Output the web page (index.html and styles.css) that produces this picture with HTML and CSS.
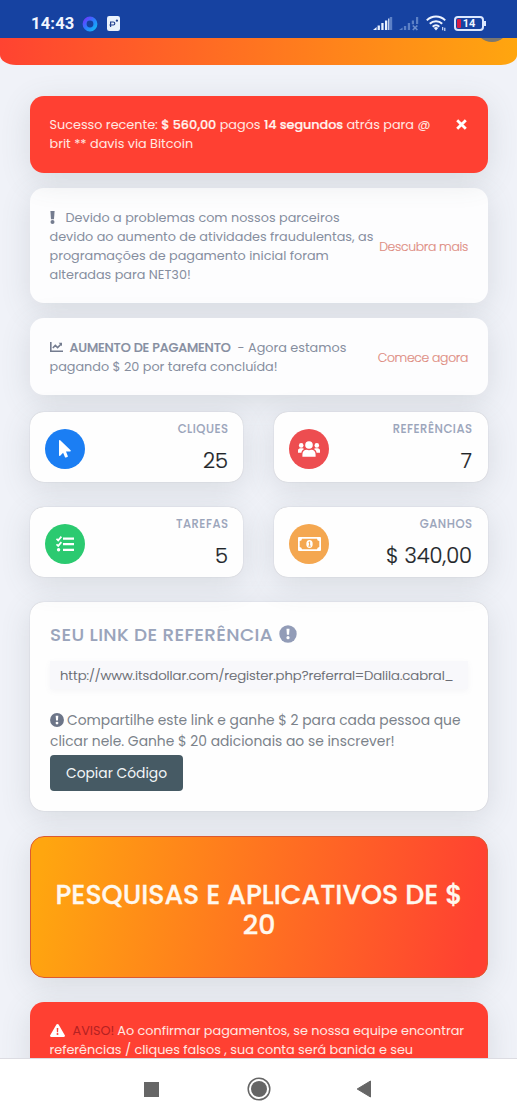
FILE: index.html
```html
<!DOCTYPE html>
<html lang="pt">
<head>
<meta charset="utf-8">
<title>Painel</title>
<link rel="stylesheet" href="styles.css">
</head>
<body>
<div class="screen">
  <header class="status">
    <span class="clock">14:43</span>
    <svg class="ring" width="16" height="16" viewBox="0 0 16 16"><defs><linearGradient id="rg" x1="0" y1="0" x2="1" y2="1"><stop offset="0" stop-color="#6a3bff"/><stop offset=".5" stop-color="#2a7dff"/><stop offset="1" stop-color="#13b6f5"/></linearGradient></defs><circle cx="8" cy="8" r="5.4" fill="none" stroke="url(#rg)" stroke-width="4"/></svg>
    <svg class="papp" width="13" height="15" viewBox="0 0 13 15"><rect width="13" height="15" rx="2.2" fill="#eaf2fc"/><path d="M3.600 11V6h2.700a1.500 1.500 0 0 1 0 3H2.400M8.800 4.600h2.200M9.900 3.500v2.200" fill="none" stroke="#23418f" stroke-width="1.200"/></svg>
    <span class="grow"></span>
    <svg width="20" height="15" viewBox="0 0 20 15"><g fill="#eaf2ff"><path d="M0 14l3.600-3v3zM4.600 9.500h2.300V14H4.600zM8.300 7h2.300v7H8.300zM12 4.500h2.300V14H12z"/><path d="M15.200 2.500h1.200V14h-1.200z"/></g><path d="M16.800 1h2.400v13h-2.400z" fill="#5c80c6"/></svg>
    <svg class="sig2" width="20" height="15" viewBox="0 0 20 15"><path fill="#5c80c6" d="M0 14l3.600-2.600V14zM4.900 10h2.300v4H4.900zM8.800 7h2.300v7H8.800zM12.800 4.500h2.200v3.800h-2.200zM17 1h2.200v7H17z"/><path d="M13.800 9.500l4.600 4.500M18.400 9.500L13.800 14" stroke="#6b8ccc" stroke-width="1.700"/></svg>
    <svg class="wifi" width="21" height="17" viewBox="0 0 21 17"><g fill="none" stroke="#eef4ff" stroke-width="2"><path d="M.8 5.400a13 13 0 0 1 18.400 0"/><path d="M3.800 8.700a8.800 8.800 0 0 1 12.400 0"/><path d="M6.700 11.700a4.700 4.700 0 0 1 6.600 0"/></g><path d="M7.800 13.100a3.200 3.200 0 0 1 4.400 0L10 15.600z" fill="#eef4ff"/><path d="M16.700 12v3.200M18.800 12.800v3.300" stroke="#dce8ff" stroke-width="1.100"/></svg>
    <span class="battery"><i></i>14</span><b class="cap"></b>
  </header>
  <div class="hero"><i class="avatar"></i></div>
  <main class="page">
    <section class="alert red">
      <div class="txt"><span class="l a1">Sucesso recente: <b>$ 560,00</b> pagos <b>14 segundos</b> atrás para @</span><span class="l a2">brit ** davis via Bitcoin</span></div>
      <svg class="close" width="11" height="11" viewBox="0 0 11 11"><path d="M1.200 1.200l8.600 8.600M9.800 1.200L1.200 9.800" stroke="#fff" stroke-width="2.800"/></svg>
    </section>
    <section class="alert white">
      <div class="txt">
        <span class="l b1"><svg class="bang" width="5" height="13" viewBox="0 0 5 13"><path d="M.4 0h4.200L4 8.200H1z"/><circle cx="2.500" cy="11" r="2"/></svg>Devido a problemas com nossos parceiros</span>
        <span class="l b2">devido ao aumento de atividades fraudulentas, as</span>
        <span class="l b3">programações de pagamento inicial foram</span>
        <span class="l b4">alteradas para NET30!</span>
      </div>
      <a class="l link d1">Descubra mais</a>
    </section>
    <section class="alert white">
      <div class="txt">
        <span class="l c1"><svg class="chart" width="13" height="10" viewBox="0 0 13 10"><path d="M.8 0v9.200H13" fill="none" stroke-width="1.600"/><path d="M2.800 6l2.500-2.600 2.300 2.200 3.600-3.600" fill="none" stroke-width="1.600"/><path d="M8.600.7H12v3.500z" class="f"/></svg><b>AUMENTO DE PAGAMENTO</b><em>- Agora estamos</em></span>
        <span class="l c2">pagando $ 20 por tarefa concluída!</span>
      </div>
      <a class="l link d2">Comece agora</a>
    </section>
    <section class="stats">
      <div class="stat"><span class="dot blue"><svg width="12" height="18" viewBox="0 0 12 18"><path fill="#fff" d="M0 .8v14.400c0 .7.800.9 1.200.5l2.900-2.900 1.800 4.300c.2.5.6.6 1 .4l1.500-.6c.5-.2.6-.6.4-1L7 11.500h4c.8 0 1-.8.6-1.200L1.200.3C.7-.1 0 .2 0 .8z"/></svg></span><div><h4>CLIQUES</h4><p>25</p></div></div>
      <div class="stat"><span class="dot rose"><svg width="22" height="16" viewBox="0 0 22 16"><g fill="#fff"><circle cx="11" cy="4" r="3.800"/><circle cx="3.200" cy="4.400" r="2.300"/><circle cx="18.800" cy="4.400" r="2.300"/><path d="M4.400 15.800v-2.300c0-2.700 1.800-4.700 4.300-4.700 1.500.6 3.100.6 4.600 0 2.500 0 4.300 2 4.300 4.700v2.300zM0 11.800V9.600c0-1.400 1-2.300 2.200-2.300h2.200c.7 0 1.200.3 1.600.7-1.400.8-2.300 2-2.600 3.800zM22 11.800V9.600c0-1.400-1-2.300-2.200-2.300h-2.200c-.7 0-1.200.3-1.600.7 1.400.8 2.300 2 2.600 3.800z"/></g></svg></span><div><h4>REFERÊNCIAS</h4><p>7</p></div></div>
      <div class="stat"><span class="dot green"><svg width="18" height="16" viewBox="0 0 18 16"><path d="M.5 2.800l1.700 1.600L5.400.6M.5 8.300l1.700 1.600 3.200-3.800" fill="none" stroke="#fff" stroke-width="1.700"/><circle cx="2.600" cy="13.800" r="1.700" fill="#fff"/><path d="M7 2.600h11M7 8.200h11M7 13.800h11" stroke="#fff" stroke-width="2.300"/></svg></span><div><h4>TAREFAS</h4><p>5</p></div></div>
      <div class="stat"><span class="dot amber"><svg width="23" height="14" viewBox="0 0 23 14"><path fill="#fff" fill-rule="evenodd" d="M1 0h21a1 1 0 0 1 1 1v12a1 1 0 0 1-1 1H1a1 1 0 0 1-1-1V1a1 1 0 0 1 1-1zM4 1.700A2.500 2.500 0 0 1 1.700 4v6A2.500 2.500 0 0 1 4 12.300h15A2.500 2.500 0 0 1 21.300 10V4A2.500 2.500 0 0 1 19 1.700z"/><ellipse cx="11.500" cy="7" rx="3.200" ry="4" fill="#fff"/><path d="M10.600 5.500l1-.6v4M10.400 9.100h2.300" fill="none" stroke="#f3a54c" stroke-width="1"/></svg></span><div><h4>GANHOS</h4><p>$ 340,00</p></div></div>
    </section>
    <section class="ref">
      <h2><span class="l h">SEU LINK DE REFERÊNCIA</span><svg width="18" height="18" viewBox="0 0 18 18"><circle cx="9" cy="9" r="8.700" fill="#929cb7"/><path d="M7.500 3.800h3l-.4 6H7.900z" fill="#fff"/><circle cx="9" cy="12.700" r="1.600" fill="#fff"/></svg></h2>
      <div class="field l"><span class="u">http://www.itsdollar.com/register.php?referral=Dalila.cabral_</span></div>
      <div class="note"><span class="l e1"><svg width="14" height="14" viewBox="0 0 18 18"><circle cx="9" cy="9" r="8.900" fill="#6c7588"/><path d="M7.300 3.400h3.400l-.5 6.400H7.800z" fill="#fff"/><circle cx="9" cy="12.900" r="1.800" fill="#fff"/></svg>Compartilhe este link e ganhe $ 2 para cada pessoa que</span><span class="l e2">clicar nele. Ganhe $ 20 adicionais ao se inscrever!</span></div>
      <button class="l">Copiar Código</button>
    </section>
    <section class="cta">PESQUISAS E APLICATIVOS DE $<br>20</section>
    <section class="alert red last">
      <div class="txt"><span class="l f1"><svg class="warn" width="15" height="13" viewBox="0 0 15 13"><path d="M7.500 0c.5 0 .9.200 1.100.6l6.200 10.600c.5.8 0 1.800-1 1.800H1.200c-1 0-1.500-1-1-1.800L6.400.6c.2-.4.600-.6 1.100-.6z" fill="#fff"/><path d="M6.700 4h1.600l-.2 4.200H6.900z" fill="#fc4133"/><circle cx="7.500" cy="10" r="1" fill="#fc4133"/></svg><i class="aviso">AVISO!</i>Ao confirmar pagamentos, se nossa equipe encontrar</span><span class="l f2">referências / cliques falsos , sua conta será banida e seu</span></div>
    </section>
  </main>
  <nav class="nav"><i class="sq"></i><svg width="24" height="24" viewBox="0 0 24 24"><circle cx="12" cy="12" r="10.800" fill="none" stroke="#666" stroke-width="1.500"/><circle cx="12" cy="12" r="8" fill="#666"/></svg><svg width="16" height="18" viewBox="0 0 16 18"><path d="M1.200 9L14.500 1v16z" fill="#666" stroke="#666" stroke-linejoin="round"/></svg></nav>
</div>
</body>
</html>
```
FILE: styles.css
```css
* { box-sizing: border-box; margin: 0; padding: 0; }
body { font-family: Poppins, Inter, "Noto Sans", sans-serif; }
.screen { width: 517px; height: 1120px; overflow: hidden; display: flex; flex-direction: column; background: #f0f2f8; }
.status { height: 38px; flex: none; background: #1642a1; display: flex; align-items: center; padding: 9px 31px 0 31px; color: #f0f5ff; }
.clock { font: 700 16.500px/18px Roboto, sans-serif; width: 43px; letter-spacing: .2px; }
.ring { margin-left: 8px; }
.papp { margin-left: 9px; }
.grow { flex: 1; }
.sig2 { margin-left: 6px; }
.wifi { margin-left: 7px; }
.battery { position: relative; width: 30px; height: 15px; margin-left: 7px; border: 2px solid #dce8ff; border-radius: 4px; font: 700 11px/11px Roboto, sans-serif; text-align: center; }
.battery i { position: absolute; left: 1px; top: 1px; width: 4px; height: 9px; background: #d51d48; border-radius: 1px; }
.cap { width: 2px; height: 5px; background: #dce8ff; }
.hero { position: relative; height: 27px; flex: none; overflow: hidden; background: linear-gradient(90deg, #ff4331, #ffa60f); border-radius: 0 0 16px 16px / 0 0 10px 10px; }
.avatar { position: absolute; left: 475px; top: -30px; width: 34px; height: 34px; border-radius: 50%; background: #7b7770; }
.page { flex: 1; min-height: 0; overflow: hidden; padding: 31px 29px 0 30px; }
.l { display: block; white-space: nowrap; }
.alert { display: flex; align-items: center; padding: 0 20px 1px 19.500px; border-radius: 14px; font-size: 12.800px; line-height: 19px; margin-bottom: 15px; box-shadow: 0 7px 30px rgba(90, 97, 105, .16); }
.txt { flex: 1; min-width: 0; }
.red { position: relative; height: 77px; background: #ff4032; color: #ffe8e2; font-weight: 400; }
.white { background: #fdfdfe; color: #868e9e; height: 115px; padding-bottom: 0; }
.white + .white { height: 77px; margin-bottom: 16px; }
.alert b { font-weight: 500; letter-spacing: -.06px; -webkit-text-stroke: .2px currentColor; }
.red b { color: #fff3ef; }
.close { position: absolute; right: 21px; top: 23px; }
.link { color: #dd8b80; font-weight: 300; font-size: 12.400px; letter-spacing: -.32px; padding-top: 2px; -webkit-text-stroke: .15px currentColor; }
.bang { fill: #747c8f; margin-right: 11px; vertical-align: -2px; }
.chart { stroke: #747c8f; margin-right: 7px; }
.chart .f { fill: #747c8f; stroke: none; }
.alert .c1 b { color: #858da0; letter-spacing: -.17px; }
.c1 em { font-style: normal; margin-left: 7px; }
.stats { display: grid; grid-template-columns: 213px 214px; column-gap: 31px; row-gap: 25px; margin-bottom: 25px; padding-top: 1px; }
.stat { height: 70px; background: #fefefe; border-radius: 14px; display: flex; align-items: flex-start; justify-content: space-between; padding: 0 15px; box-shadow: 0 0 1px rgba(80, 80, 90, .35), 0 7px 30px rgba(90, 97, 105, .16); }
.stat:nth-child(2n) { padding-right: 16px; }
.dot { width: 40px; height: 40px; margin-top: 17px; border-radius: 50%; display: flex; align-items: center; justify-content: center; }
.blue { background: #1b7ef3; }
.rose { background: #ed4d50; }
.green { background: #2bca70; }
.amber { background: #f4a750; }
.stat div { text-align: right; }
.stat h4 { font-size: 11.600px; line-height: 14px; font-weight: 500; letter-spacing: .5px; margin-right: -.5px; color: #9ba5bb; margin-top: 10px; -webkit-text-stroke: .1px currentColor; }
.stat p { font-size: 21px; line-height: 26px; margin-top: 12px; color: #212529; font-weight: 300; -webkit-text-stroke: .2px currentColor; }
.ref { height: 209px; background: #fefefe; border-radius: 14px; padding: 20px 20px; margin-bottom: 25px; box-shadow: 0 0 1px rgba(80, 80, 90, .35), 0 7px 30px rgba(90, 97, 105, .16); }
.ref h2 { display: flex; align-items: center; gap: 6px; height: 24px; font-size: 18.400px; font-weight: 500; letter-spacing: .35px; color: #9aa4bb; -webkit-text-stroke: .1px currentColor; }
.field { height: 28px; margin-top: 15px; padding-left: 10px; background: #f8f8fb; font-size: 13.200px; font-weight: 300; letter-spacing: -.035px; line-height: 29px; color: #62656c; box-shadow: 0 2px 6px rgba(100, 100, 140, .06); -webkit-text-stroke: .15px currentColor; }
.note { margin-top: 21px; font-size: 13.850px; line-height: 20.500px; color: #7b828a; }
.note svg { vertical-align: -2px; margin-right: 3px; }
.ref button { display: flex; align-items: center; justify-content: center; width: 133px; height: 36px; margin-top: 4px; border: 0; border-radius: 4px; background: #465a64; color: #f2f6f8; font: inherit; font-size: 13.850px; }
.cta { height: 142px; margin-bottom: 24px; border-radius: 14px; border: 1px solid #dc5a31; background: linear-gradient(100deg, #ffa60f 3%, #ff4131 96%); text-align: center; padding-top: 43px; font-size: 26.800px; line-height: 30px; font-weight: 500; color: #fff8ee; -webkit-text-stroke: .3px currentColor; white-space: nowrap; box-shadow: 0 7px 30px rgba(90, 97, 105, .16); }
.last { height: 96px; align-items: flex-start; padding-top: 19px; }
.warn { vertical-align: -2px; margin-right: 8px; }
.aviso { font-style: normal; color: #b42222; margin-right: 3px; }
.nav { height: 62px; flex: none; background: #fff; border-top: 1px solid #dcdce2; display: flex; align-items: center; padding: 0 0 1px 143.500px; }
.sq { width: 15px; height: 15px; background: #666; margin-right: 88px; }
.nav svg + svg { margin-left: 85px; }
```
